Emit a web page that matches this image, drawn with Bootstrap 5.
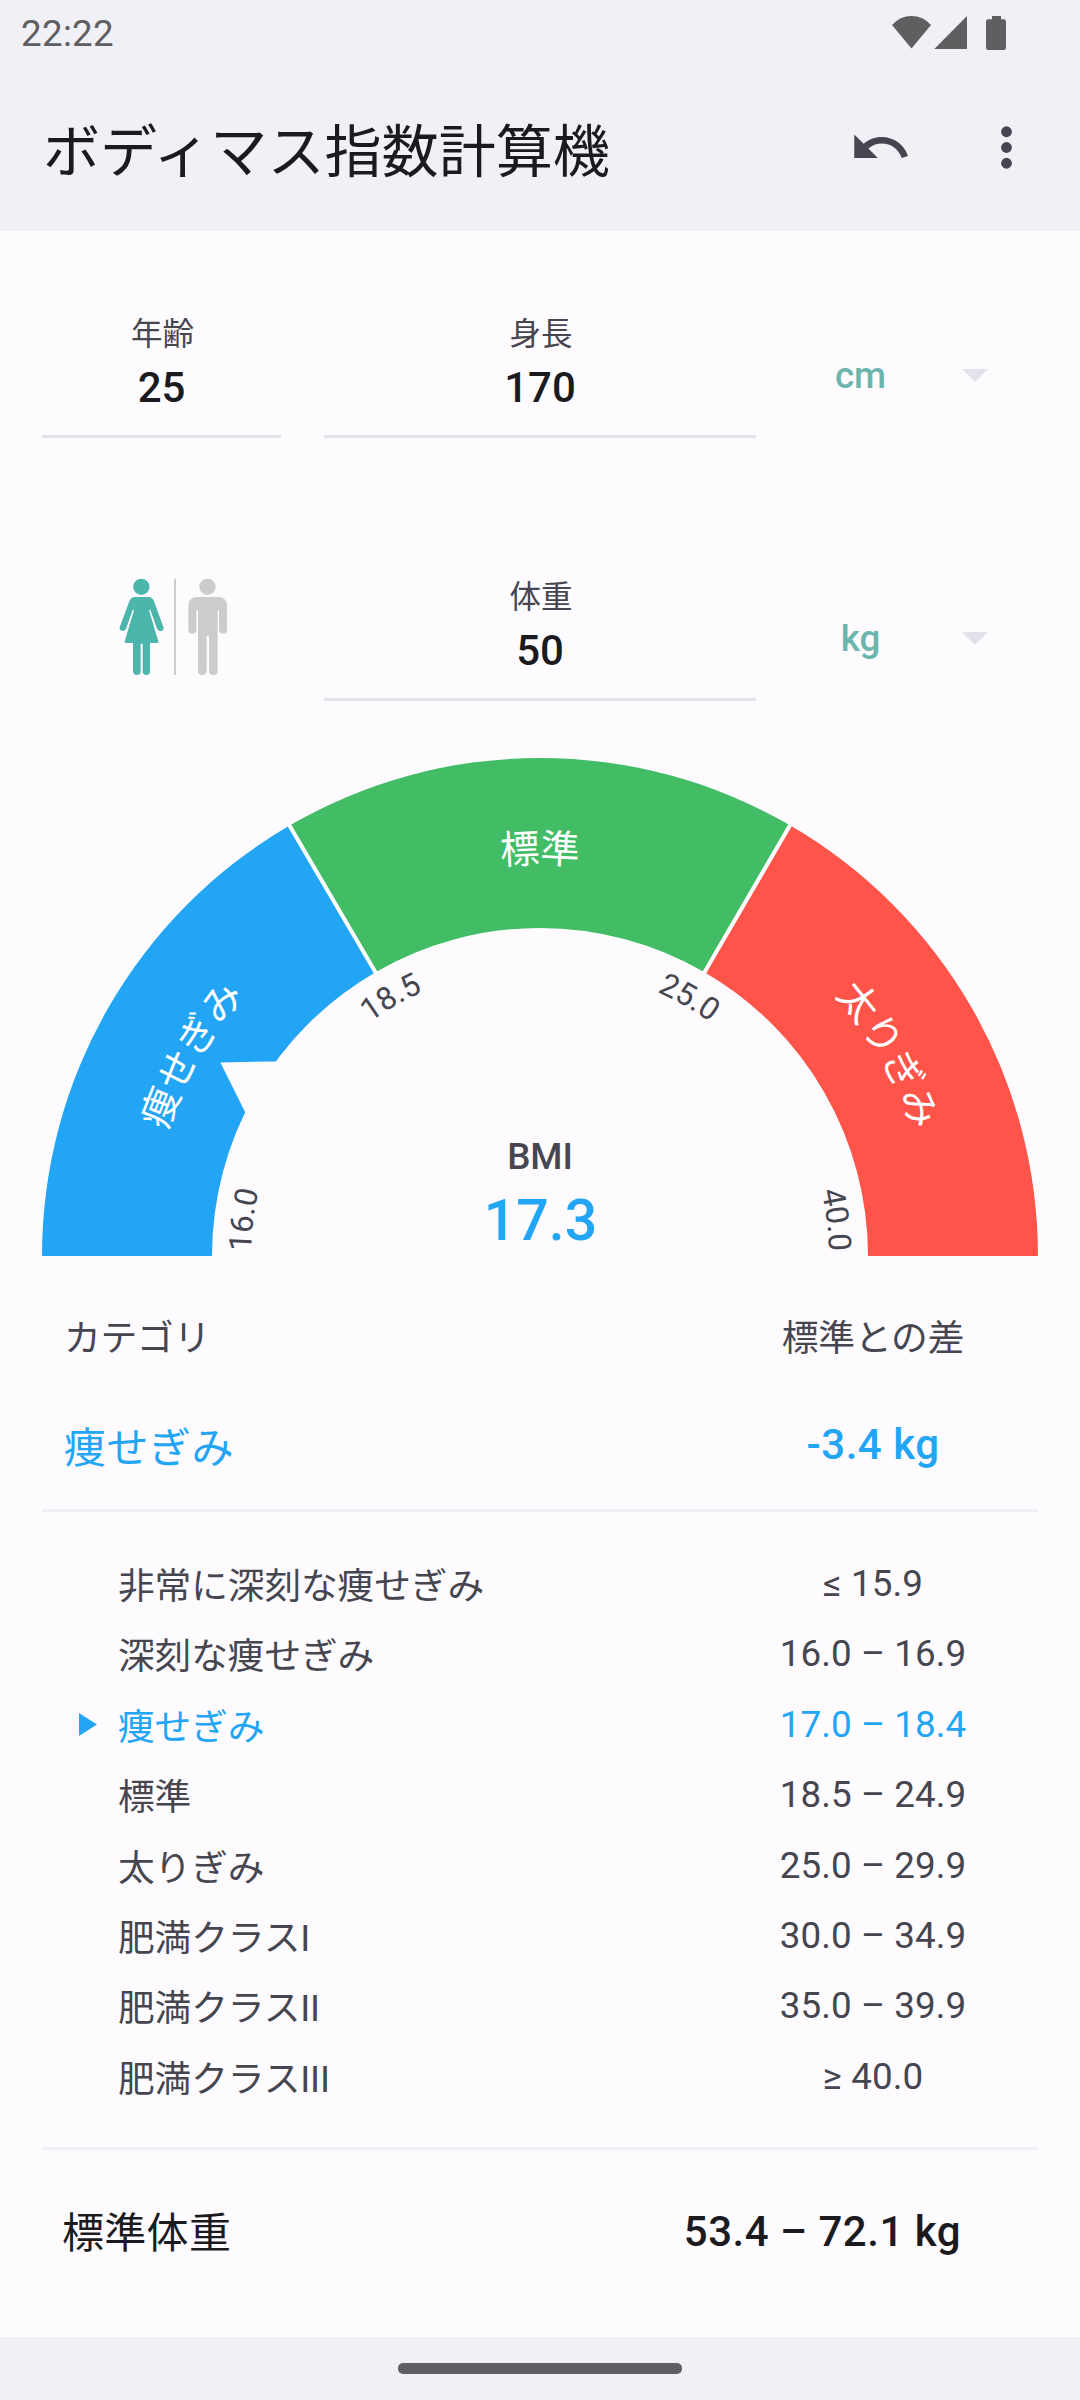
<!DOCTYPE html>
<html lang="ja">
<head>
<meta charset="utf-8">
<meta name="viewport" content="width=device-width, initial-scale=1">
<title>ボディマス指数計算機</title>
<link rel="stylesheet" href="https://cdn.jsdelivr.net/npm/bootstrap@5.3.0/dist/css/bootstrap.min.css">
<style>
  :root { --ink:#1b1b1f; --soft:#45464f; --blue:#21a5f4; --teal:#6cb5ad; --line:#e1e2ec; --bar:#f1f0f7; }
  body { width:1080px; height:2400px; overflow:hidden; background:#fefbff; color:var(--ink);
         font-family:Roboto,"Noto Sans CJK JP",sans-serif; font-size:36.75px; line-height:1; }
  svg { display:block; }
  .app-head, .app-foot { background:var(--bar); }
  .status-row { height:63px; padding:4px 68px 0 21px; color:#5f5f61; letter-spacing:.3px; }
  .status-row span { padding-top:2px; }
  .tool-row { height:168px; padding:0 42px 0 43px; }
  .app-title { font-size:57.1px; line-height:80px; margin:12px 0 0; font-weight:400; }
  .tools { gap:63px; }
  .form-row { height:207px; padding:0 42px; gap:43px; }
  .age-col { width:239px; }
  .size-col { width:432px; margin-right:-43px; }
  .entry { border-bottom:3px solid var(--line); padding:84px 0 23px; }
  .entry-name { font-size:31.5px; line-height:40px; color:var(--soft); margin-bottom:9px; padding-left:2px; }
  .entry-val { font-size:42px; line-height:48px; font-weight:500; }
  .unit-col { margin-top:83px; height:124px; color:var(--teal); font-weight:500; }
  .unit-name { width:206px; padding-left:3px; }
  .unit-col svg { margin-bottom:2px; }
  .sex-icon { margin:66px 0 0 58px; }
  .second { margin-top:56px; }
  .pair { display:flex; justify-content:space-between; padding:0 207px 0 64px; }
  .pair > .num { width:0; display:flex; justify-content:center; white-space:nowrap; }
  .caption-row { margin-top:58px; line-height:50px; color:var(--soft); letter-spacing:-.2px; }
  .result-row { margin-top:51px; line-height:60px; font-size:42px; color:var(--blue); height:94px; letter-spacing:.5px; }
  .strong-num { font-weight:500; letter-spacing:.5px; }
  .rule { height:3px; margin:0 42px; background:var(--bar); }
  .classes { padding:37px 0 0; height:635px; color:var(--soft); }
  .classes .pair { padding-left:79px; line-height:70px; height:70.4px; letter-spacing:.1px; }
  .classes .pair > :first-child { padding-top:3px; margin-left:39px; letter-spacing:-.15px; }
  .classes .active-row { color:var(--blue); }
  .active-row .pointer { margin:20px 21px 0 0; }
  .classes .active-row > :first-child { margin-left:0; }
  .ideal-row { height:187px; padding:52px 119px 0 62px; font-size:42px; line-height:60px; }
  .ideal-name { padding-top:2px; letter-spacing:.3px; }
  .app-foot { height:63px; padding-top:26px; }
  .pill { width:284px; height:11px; border-radius:5px; background:#5f5f61; }
</style>
<script src="https://cdn.jsdelivr.net/npm/bootstrap@5.3.0/dist/js/bootstrap.bundle.min.js"></script>
</head>
<body>
<header class="app-head">
  <div class="status-row d-flex align-items-center justify-content-between">
    <span>22:22</span>
    <svg width="120" height="36" viewBox="892 14 120 36" fill="#5f5f61">
      <path d="M892 23Q900 14 911.500 14T931 23L911.500 46.500Z"/>
      <path d="M934.300 47L967 14V47Z"/>
      <path d="M992 14H1001V17.200H1003.500Q1006 17.200 1006 19.700V45.500Q1006 48 1003.500 48H988.500Q986 48 986 45.500V19.700Q986 17.200 988.500 17.200H992Z"/>
    </svg>
  </div>
  <div class="tool-row d-flex align-items-center justify-content-between">
    <h1 class="app-title">ボディマス指数計算機</h1>
    <div class="tools d-flex">
      <svg width="63" height="63" viewBox="0 0 24 24" fill="#45464f"><path d="M12.500 8c-2.650 0-5.050.99-6.900 2.600L2 7v9h9l-3.620-3.620c1.390-1.160 3.160-1.880 5.120-1.880 3.540 0 6.550 2.310 7.600 5.500l2.370-.78C21.080 11.030 17.150 8 12.500 8z"/></svg>
      <svg width="63" height="63" viewBox="0 0 24 24" fill="#45464f"><circle cx="12" cy="6" r="2.050"/><circle cx="12" cy="12" r="2.050"/><circle cx="12" cy="18" r="2.050"/></svg>
    </div>
  </div>
</header>

<main>
  <section class="form-row d-flex">
    <div class="age-col text-center entry"><div class="entry-name">年齢</div><div class="entry-val">25</div></div>
    <div class="size-col text-center entry"><div class="entry-name">身長</div><div class="entry-val">170</div></div>
    <div class="unit-col d-flex align-items-center">
      <div class="unit-name text-center">cm</div>
      <svg width="26" height="13" viewBox="0 0 26 13" fill="#e1e2ec"><path d="M0 0H26L13 13Z"/></svg>
    </div>
  </section>
  <section class="form-row second d-flex">
    <div class="age-col">
      <svg class="sex-icon" width="150" height="130" viewBox="0 0 450 390">
        <g fill="#4db6ac">
          <circle cx="124" cy="80.500" r="24.500"/>
          <path d="M104 111H145Q157 111 162 124L190 200Q193 210 184 213Q174 215 171 206L151 149L147 151L175 244Q176 249 171 249H150V334Q150 345 139 345Q128 345 128 334V251H122V334Q122 345 111 345Q99 345 99 334V249H78Q73 249 74 244L102 151L98 149L79 205Q75 215 65 212Q56 209 60 199L88 124Q93 111 104 111Z"/>
        </g>
        <path d="M222 58Q225 53 228 58V345H222Z" fill="#ccc"/>
        <g fill="#ccc">
          <circle cx="322.500" cy="80.500" r="24.500"/>
          <path d="M289 111H356Q381 113 381 137V209Q381 221 369 221Q357 221 357 209V151H353V334Q353 345 340 345Q327 345 327 334V231Q327 227 323.500 227Q320 227 320 231V334Q320 345 307 345Q294 345 294 334V151H289V209Q289 221 277 221Q265 221 265 209V137Q265 113 289 111Z"/>
        </g>
      </svg>
    </div>
    <div class="size-col text-center entry"><div class="entry-name">体重</div><div class="entry-val">50</div></div>
    <div class="unit-col d-flex align-items-center">
      <div class="unit-name text-center">kg</div>
      <svg width="26" height="13" viewBox="0 0 26 13" fill="#e1e2ec"><path d="M0 0H26L13 13Z"/></svg>
    </div>
  </section>

  <!-- Gauge: centre (540,555), outer radius 498, inner radius 328 -->
  <svg width="1080" height="555" viewBox="0 0 1080 555">
    <defs>
      <path id="arcName" d="M146.500 555A393.500 393.500 0 0 1 933.500 555"/>
      <path id="arcTick" d="M251 555A289 289 0 0 1 829 555"/>
    </defs>
    <path fill="#21a5f4" d="M42 555A498 498 0 0 1 289.500 124.600L375.500 271.200A328 328 0 0 0 212 555Z"/>
    <path fill="#42bd66" d="M289.500 124.600A498 498 0 0 1 790 124.300L704.500 271.200A328 328 0 0 0 375.500 271.200Z"/>
    <path fill="#ff5449" d="M790 124.300A498 498 0 0 1 1038 555H868A328 328 0 0 0 704.500 271.200Z"/>
    <path stroke="#fff" stroke-width="4" d="M288 122L376.500 273M791.500 121.700L703.500 273"/>
    <path fill="#fefbff" d="M220.400 361.500L276.200 360.400L292 370L262 412L245.200 411.200Z"/>
    <g font-size="39.375" fill="#fff" text-anchor="middle">
      <text><textPath href="#arcName" startOffset="16.667%">痩せぎみ</textPath></text>
      <text><textPath href="#arcName" startOffset="50%">標準</textPath></text>
      <text><textPath href="#arcName" startOffset="83.333%">太りぎみ</textPath></text>
    </g>
    <g font-size="31.5" fill="#45464f" text-anchor="middle">
      <text><textPath href="#arcTick" startOffset="3.900%">16.0</textPath></text>
      <text><textPath href="#arcTick" startOffset="33.333%">18.5</textPath></text>
      <text><textPath href="#arcTick" startOffset="66.667%">25.0</textPath></text>
      <text><textPath href="#arcTick" startOffset="96.100%">40.0</textPath></text>
    </g>
    <g font-weight="500" text-anchor="middle">
      <text x="540" y="468" font-size="36.75" fill="#45464f">BMI</text>
      <text x="540.500" y="538.500" font-size="57.2" fill="#21a5f4">17.3</text>
    </g>
  </svg>

  <div class="pair caption-row"><div>カテゴリ</div><div class="num">標準との差</div></div>
  <div class="pair result-row"><div class="pt-1">痩せぎみ</div><div class="num strong-num">-3.4 kg</div></div>
  <div class="rule"></div>

  <section class="classes">
    <div class="pair"><div>非常に深刻な痩せぎみ</div><div class="num">≤ 15.9</div></div>
    <div class="pair"><div>深刻な痩せぎみ</div><div class="num">16.0 – 16.9</div></div>
    <div class="pair active-row">
      <div class="d-flex align-items-start"><svg class="pointer" width="18" height="23" viewBox="0 0 18 23" fill="#21a5f4"><path d="M0 0L18 11.500L0 23Z"/></svg>痩せぎみ</div>
      <div class="num">17.0 – 18.4</div>
    </div>
    <div class="pair"><div>標準</div><div class="num">18.5 – 24.9</div></div>
    <div class="pair"><div>太りぎみ</div><div class="num">25.0 – 29.9</div></div>
    <div class="pair"><div>肥満クラスI</div><div class="num">30.0 – 34.9</div></div>
    <div class="pair"><div>肥満クラスII</div><div class="num">35.0 – 39.9</div></div>
    <div class="pair"><div>肥満クラスIII</div><div class="num">≥ 40.0</div></div>
  </section>
  <div class="rule"></div>

  <div class="ideal-row d-flex justify-content-between align-items-start">
    <div class="ideal-name">標準体重</div><div class="strong-num">53.4 – 72.1 kg</div>
  </div>
</main>
<footer class="app-foot"><div class="pill mx-auto"></div></footer>
</body>
</html>
